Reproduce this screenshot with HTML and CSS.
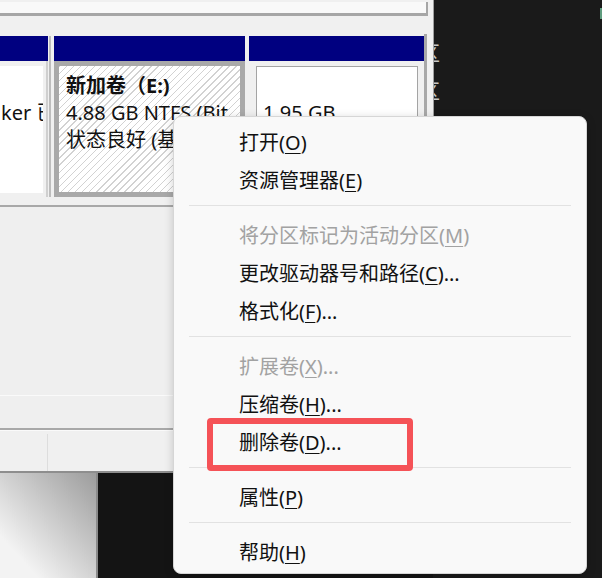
FILE: index.html
```html
<!DOCTYPE html>
<html lang="zh-CN">
<head>
    <meta charset="UTF-8">
    <title>磁盘管理 - 右键菜单</title>
    <link rel="stylesheet" href="styles.css">
</head>
<body>
    <div class="desktop">
        <div class="backdrop-app">
            <span class="frag frag-one">区</span>
            <span class="frag frag-two">区</span>
            <span class="green-edge"></span>
        </div>

        <div class="lower-window">
            <div class="lower-fade"></div>
        </div>

        <div class="disk-window">
            <div class="hscroll"><div class="thumb"></div></div>

            <div class="disk-pane">
                <div class="disk-row">
                    <div class="part part-cut">
                        <div class="part-head"></div>
                        <div class="part-body">
                            <div class="part-box">
                                <div class="line"></div>
                                <div class="line">ker 已</div>
                            </div>
                        </div>
                    </div>
                    <div class="part-gap gap-wide"></div>
                    <div class="part part-selected">
                        <div class="part-head"></div>
                        <div class="part-body">
                            <div class="part-box">
                                <div class="line title">新加卷（E:)</div>
                                <div class="line">4.88 GB NTFS (Bit</div>
                                <div class="line">状态良好 (基</div>
                            </div>
                        </div>
                    </div>
                    <div class="part-gap"></div>
                    <div class="part part-free">
                        <div class="part-head"></div>
                        <div class="part-body">
                            <div class="part-box">
                                <div class="line"></div>
                                <div class="line">1.95 GB</div>
                            </div>
                        </div>
                    </div>
                    <div class="row-end"></div>
                </div>
            </div>

            <div class="lower-pane"><div class="lower-rule"></div></div>

            <div class="status-bar">
                <div class="status-cell first"></div>
                <div class="status-cell"></div>
            </div>
        </div>

        <div class="context-menu">
            <div class="menu-item">打开(<u>O</u>)</div>
            <div class="menu-item">资源管理器(<u>E</u>)</div>
            <div class="menu-sep"></div>
            <div class="menu-item disabled">将分区标记为活动分区(<u>M</u>)</div>
            <div class="menu-item">更改驱动器号和路径(<u>C</u>)...</div>
            <div class="menu-item">格式化(<u>F</u>)...</div>
            <div class="menu-sep"></div>
            <div class="menu-item disabled">扩展卷(<u>X</u>)...</div>
            <div class="menu-item">压缩卷(<u>H</u>)...</div>
            <div class="menu-item">删除卷(<u>D</u>)...</div>
            <div class="menu-sep"></div>
            <div class="menu-item">属性(<u>P</u>)</div>
            <div class="menu-sep"></div>
            <div class="menu-item">帮助(<u>H</u>)</div>
        </div>

        <!-- red annotation round the delete item -->
        <div class="callout"></div>
    </div>
</body>
</html>
```

FILE: styles.css
```css
* {
    margin: 0;
    padding: 0;
    box-sizing: border-box;
}
body {
    width: 602px;
    height: 578px;
    overflow: hidden;
    background-color: #1a1a1a;
    font-family: "Noto Sans", "Noto Sans CJK SC", sans-serif;
}
.desktop {
    position: relative;
    width: 602px;
    height: 578px;
    overflow: hidden;
}
.backdrop-app {
    position: absolute;
    inset: 0;
    background-color: #1a1a1a;
}
.frag {
    position: absolute;
    left: 420px;
    font-family: "Noto Sans CJK SC", sans-serif;
    font-size: 20px;
    line-height: 20px;
    color: #c8c8c8;
}
.frag-one {
    top: 43px;
}
.frag-two {
    top: 81px;
}
.green-edge {
    position: absolute;
    right: 0;
    top: 8px;
    width: 2px;
    height: 11px;
    background-color: #5f9c7e;
}
.lower-window {
    position: absolute;
    left: 0;
    top: 473px;
    width: 433px;
    height: 105px;
    background-color: #141414;
}
.lower-fade {
    width: 98px;
    height: 100%;
    background: linear-gradient(to bottom left, #9c9c9c, #f3f3f3 80%);
    border-right: 2px solid #8a8a8a;
}
.disk-window {
    position: absolute;
    left: 0;
    top: 0;
    width: 434px;
    height: 473px;
    display: flex;
    flex-direction: column;
    background-color: #f0f0f0;
    border-right: 1px solid #a0a0a0;
    border-bottom: 2px solid #8e8e8e;
}
.hscroll {
    height: 16px;
    padding-top: 2px;
}
.thumb {
    width: 428px;
    height: 14px;
    background-color: #f9f9f9;
    border-bottom: 3px solid #a6a6a6;
    border-right: 2px solid #a6a6a6;
}
.disk-pane {
    padding: 20px 0 8px;
    border-bottom: 2px solid #a8a8a8;
}
.disk-row {
    display: flex;
    height: 161px;
}
.part {
    display: flex;
    flex-direction: column;
}
.part-head {
    height: 25px;
    background-color: #000080;
}
.part-body {
    flex: 1;
    display: flex;
}
.part-box {
    flex: 1;
    overflow: hidden;
    white-space: nowrap;
    font-size: 20px;
    line-height: 27px;
    color: #111;
}
.line {
    height: 27px;
}
.title {
    font-weight: bold;
}
.part-cut {
    width: 48px;
}
.part-cut .part-body {
    padding: 5px 3px 4px 0;
    border-right: 2px solid #cfcfcf;
}
.part-cut .part-box {
    background-color: #fff;
    padding: 6px 0 0 1px;
}
.part-gap {
    width: 4px;
}
.gap-wide {
    width: 5px;
    margin-left: 1px;
    border-left: 2px solid #bdbdbd;
}
.part-selected {
    width: 191px;
}
.part-selected .part-body {
    padding: 5px;
    background-color: #a9a9a9;
}
.part-selected .part-box {
    padding: 6px 0 0 7px;
    background: repeating-linear-gradient(135deg, #d2d2d2 0 1px, #fff 1px 5px);
}
.part-free {
    width: 175px;
}
.part-free .part-body {
    padding: 5px 6px 4px 7px;
}
.part-free .part-box {
    background-color: #fff;
    border: 1px solid #a4a4a4;
    padding: 5px 0 0 6px;
}
.row-end {
    width: 3px;
    margin-top: -2px;
    background-color: #a8a8a8;
}
.lower-pane {
    height: 223px;
    border-bottom: 2px solid #a8a8a8;
    padding-top: 188px;
    background-color: #efefef;
}
.lower-rule {
    height: 1px;
    background-color: #fafafa;
}
.status-bar {
    flex: 1;
    display: flex;
    border-top: 1px solid #fafafa;
    padding-top: 3px;
}
.status-cell {
    flex: 1;
}
.status-cell.first {
    flex: 0 0 48px;
    border-right: 1px solid #dddddd;
}
.context-menu {
    position: absolute;
    left: 173px;
    top: 116px;
    width: 414px;
    height: 458px;
    padding: 7px 0;
    background-color: #f9f9f9;
    border: 1px solid #d6d6d6;
    border-radius: 8px;
    box-shadow: 0 2px 10px rgba(0, 0, 0, 0.18);
}
.menu-item {
    height: 38px;
    line-height: 38px;
    padding-left: 65px;
    font-size: 20px;
    color: #111;
    white-space: nowrap;
}
.menu-item u {
    text-underline-offset: 3px;
    text-decoration-thickness: 1px;
}
.menu-item.disabled {
    color: #a2a2a2;
}
.menu-sep {
    height: 1px;
    margin: 5px 15px 11px;
    background-color: #e2e2e2;
}
.callout {
    position: absolute;
    left: 207px;
    top: 418px;
    width: 206px;
    height: 53px;
    border: 6px solid #f55257;
    border-radius: 4px;
}
```
